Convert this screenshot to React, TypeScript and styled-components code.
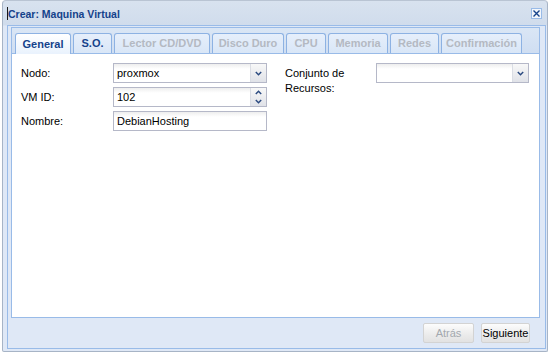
import React from "react";
import styled, { createGlobalStyle } from "styled-components";

const Global = createGlobalStyle`
  html, body { margin: 0; padding: 0; background: #ffffff; }
  body { font-family: "Liberation Sans", Arial, sans-serif; }
`;

const Win = styled.div`
  margin-left: 2px;
  width: 546px;
  height: 352px;
  box-sizing: border-box;
  border: 1px solid #a7b4c6;
  border-top-color: #b9c4d3;
  border-radius: 4px 4px 2px 2px;
  background: linear-gradient(#d8e2ef, #d0dcec 24px, #dfe8f6 25px);
  display: flex;
  flex-direction: column;
  padding: 0 1px 2px 4px;
`;

const Header = styled.div`
  height: 24px;
  flex: none;
  display: flex;
  align-items: center;
  justify-content: space-between;
  padding: 1px 4px 0 0;
  box-sizing: border-box;
`;

const Title = styled.div`
  display: flex;
  align-items: center;
  font: bold 10.5px "Liberation Sans", Arial, sans-serif;
  color: #15428b;
`;

const Caret = styled.span`
  width: 1px;
  height: 13px;
  background: #1a1a1a;
`;

const Close = styled.div`
  width: 11px;
  height: 11px;
  box-sizing: border-box;
  border: 1px solid #99bbe8;
  background: #f2f6fc;
  display: flex;
  align-items: center;
  justify-content: center;
`;

const Frame = styled.div`
  flex: 1;
  display: flex;
  flex-direction: column;
  border: 1px solid #99bbe8;
  background: #dfe8f6;
  padding: 1px 5px 0 3px;
`;

const TabPanel = styled.div`
  flex: 1;
  display: flex;
  flex-direction: column;
  border: 1px solid #99bbe8;
`;

const TabBar = styled.div`
  display: flex;
  gap: 2px;
  padding: 5px 0 0 3px;
  height: 20px;
  border-bottom: 1px solid #99bbe8;
  background: linear-gradient(#dae6f5, #cfdef2);
`;

const Tab = styled.div<{ $active?: boolean; $disabled?: boolean; $w: number }>`
  box-sizing: border-box;
  width: ${(p) => p.$w}px;
  height: ${(p) => (p.$active ? "21px" : "20px")};
  white-space: nowrap;
  display: flex;
  align-items: center;
  justify-content: center;
  border: 1px solid #8db2e3;
  border-bottom: none;
  border-radius: 3px 3px 0 0;
  background: ${(p) =>
    p.$active ? "linear-gradient(#ffffff, #e9f2fd)" : "linear-gradient(#e6effb, #d9e6f7)"};
  font: bold 11px "Liberation Sans", Arial, sans-serif;
  color: ${(p) => (p.$disabled ? "#b4b9c2" : "#15428b")};
  margin-bottom: ${(p) => (p.$active ? "-1px" : "0")};
  padding-bottom: 1px;
  position: relative;
`;

const Body = styled.div`
  flex: 1;
  background: #ffffff;
  display: flex;
  gap: 18px;
  padding: 9px 9px;
`;

const Column = styled.div<{ $w: number }>`
  width: ${(p) => p.$w}px;
  display: flex;
  flex-direction: column;
  gap: 4px;
`;

const Row = styled.div`
  display: flex;
  align-items: flex-start;
`;

const Label = styled.div<{ $w: number }>`
  width: ${(p) => p.$w}px;
  flex: none;
  font: 11px "Liberation Sans", Arial, sans-serif;
  color: #000;
  padding-top: 3px;
  line-height: 15px;
`;

const Field = styled.div`
  flex: 1;
  height: 20px;
  box-sizing: border-box;
  border: 1px solid #b5b8c8;
  background: linear-gradient(#eeeeee, #ffffff 5px);
  display: flex;
  align-items: stretch;
`;

const Value = styled.div`
  flex: 1;
  padding-left: 3px;
  font: 11px "Liberation Sans", Arial, sans-serif;
  line-height: 18px;
  color: #000;
`;

const Trigger = styled.div`
  width: 15px;
  border-left: 1px solid #dadde4;
  background: linear-gradient(#f8f8f8, #e0e2e8);
  display: flex;
  flex-direction: column;
  align-items: center;
  justify-content: center;
`;

const SpinHalf = styled.div`
  flex: 1;
  display: flex;
  align-items: center;
  justify-content: center;
`;

const Footer = styled.div`
  height: 30px;
  flex: none;
  display: flex;
  align-items: center;
  justify-content: flex-end;
  gap: 7px;
  padding-right: 10px;
`;

const Button = styled.div<{ $disabled?: boolean; $w: number }>`
  width: ${(p) => p.$w}px;
  height: 20px;
  box-sizing: border-box;
  border: 1px solid #d3d3d3;
  border-radius: 2px;
  background: linear-gradient(#fcfcfc, #ebebeb 60%, #e2e2e2);
  display: flex;
  align-items: center;
  justify-content: center;
  font: 11px "Liberation Sans", Arial, sans-serif;
  color: ${(p) => (p.$disabled ? "#a3a8ae" : "#000")};
`;

const Chevron = ({ up }: { up?: boolean }) => (
  <svg width="7" height="5" viewBox="0 0 7 5">
    <path
      d={up ? "M0.8 4 L3.5 1.3 L6.2 4" : "M0.8 1 L3.5 3.7 L6.2 1"}
      fill="none"
      stroke="#2b4a80"
      strokeWidth="1.5"
    />
  </svg>
);

const tabs = [
  { t: "General", w: 56, a: true },
  { t: "S.O.", w: 39 },
  { t: "Lector CD/DVD", w: 96, d: true },
  { t: "Disco Duro", w: 72, d: true },
  { t: "CPU", w: 40, d: true },
  { t: "Memoria", w: 60, d: true },
  { t: "Redes", w: 49, d: true },
  { t: "Confirmación", w: 81, d: true },
];

export default function App() {
  return (
    <>
      <Global />
      <Win>
        <Header>
          <Title>
            <Caret />
            Crear: Maquina Virtual
          </Title>
          <Close>
            <svg width="7" height="7" viewBox="0 0 7 7">
              <path d="M0.5 0.5 L6.5 6.5 M6.5 0.5 L0.5 6.5" stroke="#15428b" strokeWidth="1.4" />
            </svg>
          </Close>
        </Header>
        <Frame>
          <TabPanel>
            <TabBar>
              {tabs.map((x) => (
                <Tab key={x.t} $w={x.w} $active={x.a} $disabled={x.d}>
                  {x.t}
                </Tab>
              ))}
            </TabBar>
            <Body>
              <Column $w={246}>
                <Row>
                  <Label $w={92}>Nodo:</Label>
                  <Field>
                    <Value>proxmox</Value>
                    <Trigger>
                      <Chevron />
                    </Trigger>
                  </Field>
                </Row>
                <Row>
                  <Label $w={92}>VM ID:</Label>
                  <Field>
                    <Value>102</Value>
                    <Trigger>
                      <SpinHalf>
                        <Chevron up />
                      </SpinHalf>
                      <SpinHalf>
                        <Chevron />
                      </SpinHalf>
                    </Trigger>
                  </Field>
                </Row>
                <Row>
                  <Label $w={92}>Nombre:</Label>
                  <Field>
                    <Value>DebianHosting</Value>
                  </Field>
                </Row>
              </Column>
              <Column $w={244}>
                <Row>
                  <Label $w={91}>
                    Conjunto de
                    <br />
                    Recursos:
                  </Label>
                  <Field>
                    <Value></Value>
                    <Trigger>
                      <Chevron />
                    </Trigger>
                  </Field>
                </Row>
              </Column>
            </Body>
          </TabPanel>
          <Footer>
            <Button $disabled $w={51}>
              Atrás
            </Button>
            <Button $w={49}>Siguiente</Button>
          </Footer>
        </Frame>
      </Win>
    </>
  );
}
